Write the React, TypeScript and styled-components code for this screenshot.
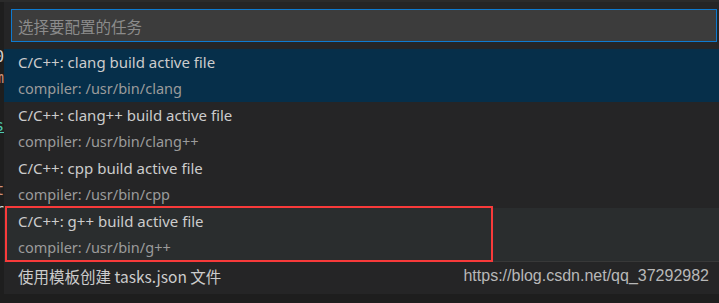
import React from "react";
import styled, { createGlobalStyle } from "styled-components";

const Global = createGlobalStyle`
  html, body { margin: 0; padding: 0; background: #1e1e1e; }
  body { width: 719px; height: 303px; overflow: hidden; }
`;

const UI_FONT = `"Segoe UI", "Noto Sans", "Noto Sans CJK SC", sans-serif`;

const Page = styled.div`
  width: 719px;
  height: 303px;
  background: #1e1e1e;
  overflow: hidden;
  font-family: ${UI_FONT};
  display: flex;
  flex-direction: column;
`;

const TopStrip = styled.div`
  height: 2px;
  flex: none;
  background: #2b2b2b;
`;

const Body = styled.div`
  flex: 1;
  display: flex;
  flex-direction: row;
  min-height: 0;
`;

const EditorEdge = styled.div`
  width: 4px;
  flex: none;
  overflow: hidden;
  display: flex;
  flex-direction: column;
  padding-top: 45px;
`;

const CodeLine = styled.div<{ $h: number; $color?: string; $under?: boolean }>`
  height: ${(p) => p.$h}px;
  display: flex;
  justify-content: flex-end;
  font-family: "DejaVu Sans Mono", monospace;
  font-size: 15px;
  line-height: 20px;
  white-space: pre;
  color: ${(p) => p.$color ?? "#d4d4d4"};
  text-decoration: ${(p) => (p.$under ? "underline" : "none")};
`;

const Widget = styled.div`
  position: relative;
  flex: none;
  width: 720px;
  height: 292px;
  background: #252526;
  display: flex;
  flex-direction: column;
`;

const InputWrap = styled.div`
  padding: 7px 2px 7px 7px;
`;

const Input = styled.div`
  height: 31px;
  width: 698px;
  border: 1px solid #0e7ad0;
  background: #3c3c3c;
  display: flex;
  align-items: center;
  padding-left: 6px;
  box-sizing: content-box;
  color: #8b8b8b;
  font-size: 15.5px;
  font-family: "Noto Sans CJK SC", sans-serif;
`;

const List = styled.div`
  display: flex;
  flex-direction: column;
  position: relative;
`;

const Row = styled.div<{ $bg?: string }>`
  height: 53px;
  box-sizing: border-box;
  padding: 0 0 1px 14px;
  background: ${(p) => p.$bg ?? "transparent"};
  display: flex;
  flex-direction: column;
  justify-content: center;
  gap: 6px;
`;

const SingleRow = styled.div`
  height: 32px;
  box-sizing: border-box;
  padding: 0 0 3px 14px;
  border-top: 1px solid #383838;
  display: flex;
  align-items: center;
  color: #cccccc;
  font-size: 15.5px;
  font-family: "Noto Sans CJK SC", sans-serif;
`;

const Title = styled.div`
  color: #cccccc;
  font-size: 15px;
  line-height: 20px;
`;

const Sub = styled.div`
  color: #9b9b9b;
  font-size: 14.5px;
  line-height: 20px;
`;

const Highlight = styled.div`
  position: absolute;
  left: 1px;
  top: 157px;
  width: 484px;
  height: 52px;
  border: 2px solid #f83a3a;
`;

const Watermark = styled.div`
  position: absolute;
  right: 15px;
  bottom: 9px;
  font-family: "Liberation Sans", Arial, sans-serif;
  font-size: 16px;
  color: #b8b8b8;
`;

const items = [
  { t: "C/C++: clang build active file", s: "compiler: /usr/bin/clang", bg: "#062f4a" },
  { t: "C/C++: clang++ build active file", s: "compiler: /usr/bin/clang++" },
  { t: "C/C++: cpp build active file", s: "compiler: /usr/bin/cpp" },
  { t: "C/C++: g++ build active file", s: "compiler: /usr/bin/g++", bg: "#2a2d2e" },
];

const code = [
  { h: 21, text: "0" },
  { h: 48, text: "m", color: "#ce9178" },
  { h: 64, text: "s", color: "#4ec9b0", under: true },
  { h: 20, text: "t", color: "#ce9178" },
  { h: 20, text: "r" },
];

export default function App() {
  return (
    <Page>
      <Global />
      <TopStrip />
      <Body>
        <EditorEdge>
          {code.map((c, i) => (
            <CodeLine key={i} $h={c.h} $color={c.color} $under={c.under}>
              {c.text}
            </CodeLine>
          ))}
        </EditorEdge>
        <Widget>
          <InputWrap>
            <Input>选择要配置的任务</Input>
          </InputWrap>
          <List>
            {items.map((it) => (
              <Row key={it.t} $bg={it.bg}>
                <Title>{it.t}</Title>
                <Sub>{it.s}</Sub>
              </Row>
            ))}
            <SingleRow>使用模板创建 tasks.json 文件</SingleRow>
            <Highlight />
          </List>
          <Watermark>https://blog.csdn.net/qq_37292982</Watermark>
        </Widget>
      </Body>
    </Page>
  );
}
